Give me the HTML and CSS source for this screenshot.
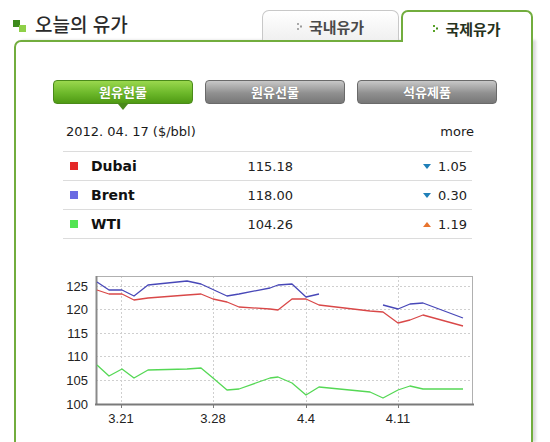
FILE: index.html
```html
<!DOCTYPE html>
<html lang="ko">
<head>
<meta charset="utf-8">
<title>오늘의 유가</title>
<link rel="stylesheet" href="styles.css">
</head>
<body>
<div class="page">
  <div class="head">
    <div class="title">
      <svg class="title-icon" width="13" height="12" viewBox="0 0 13 12">
        <rect x="0" y="0" width="7" height="7" fill="#3d8a1c"/>
        <rect x="6" y="5" width="7" height="7" fill="#8fd048"/>
      </svg>
      <span>오늘의 유가</span>
    </div>
    <div class="tabs">
      <div class="tab">
        <svg class="bullet" width="5" height="7" viewBox="0 0 5 7"><rect x="0" y="0" width="2" height="2" fill="#aaa"/><rect x="3" y="2.5" width="2" height="2" fill="#999"/><rect x="0" y="5" width="2" height="2" fill="#aaa"/></svg>
        <span>국내유가</span>
      </div>
      <div class="tab tab-on">
        <svg class="bullet" width="5" height="7" viewBox="0 0 5 7"><rect x="0" y="0" width="2" height="2" fill="#5aa428"/><rect x="3" y="2.5" width="2" height="2" fill="#3f8a18"/><rect x="0" y="5" width="2" height="2" fill="#5aa428"/></svg>
        <span>국제유가</span>
      </div>
    </div>
  </div>
  <div class="panel">
    <div class="btns">
      <div class="btn btn-on">원유현물</div>
      <div class="btn">원유선물</div>
      <div class="btn">석유제품</div>
    </div>
    <div class="info">
      <div class="date-row">
        <span>2012. 04. 17 ($/bbl)</span>
        <span>more</span>
      </div>
      <div class="rows">
        <div class="row">
          <span class="mark mark-red"></span>
          <span class="name">Dubai</span>
          <span class="val">115.18</span>
          <span class="chg"><span class="tri tri-down"></span>1.05</span>
        </div>
        <div class="row">
          <span class="mark mark-blue"></span>
          <span class="name">Brent</span>
          <span class="val">118.00</span>
          <span class="chg"><span class="tri tri-down"></span>0.30</span>
        </div>
        <div class="row">
          <span class="mark mark-green"></span>
          <span class="name">WTI</span>
          <span class="val">104.26</span>
          <span class="chg"><span class="tri tri-up"></span>1.19</span>
        </div>
      </div>
    </div>
    <svg class="chart" width="515" height="182" viewBox="16 260 515 182">
      <g stroke="#cfcfcf" stroke-width="1" stroke-dasharray="2 2" fill="none">
        <line x1="96" y1="285.5" x2="473" y2="285.5"/>
        <line x1="96" y1="308.5" x2="473" y2="308.5"/>
        <line x1="96" y1="332.5" x2="473" y2="332.5"/>
        <line x1="96" y1="355.5" x2="473" y2="355.5"/>
        <line x1="96" y1="379.5" x2="473" y2="379.5"/>
        <line x1="121.5" y1="275" x2="121.5" y2="403"/>
        <line x1="213.5" y1="275" x2="213.5" y2="403"/>
        <line x1="306.5" y1="275" x2="306.5" y2="403"/>
        <line x1="398.5" y1="275" x2="398.5" y2="403"/>
      </g>
      <line x1="96" y1="275.5" x2="473" y2="275.5" stroke="#b0b0b0" stroke-width="1"/>
      <line x1="472.5" y1="275" x2="472.5" y2="403" stroke="#b0b0b0" stroke-width="1"/>
      <line x1="96.5" y1="275" x2="96.5" y2="404" stroke="#8a8a8a" stroke-width="2"/>
      <line x1="95" y1="403.5" x2="474" y2="403.5" stroke="#7a7a7a" stroke-width="2"/>
      <g stroke="#7a7a7a" stroke-width="1">
        <line x1="121.5" y1="403" x2="121.5" y2="407"/>
        <line x1="213.5" y1="403" x2="213.5" y2="407"/>
        <line x1="306.5" y1="403" x2="306.5" y2="407"/>
        <line x1="398.5" y1="403" x2="398.5" y2="407"/>
      </g>
      <g class="axis" text-anchor="end">
        <text x="88" y="290">125</text>
        <text x="88" y="313">120</text>
        <text x="88" y="337">115</text>
        <text x="88" y="360">110</text>
        <text x="88" y="384">105</text>
        <text x="88" y="408">100</text>
      </g>
      <g class="axis" text-anchor="middle">
        <text x="121" y="422">3.21</text>
        <text x="213" y="422">3.28</text>
        <text x="306" y="422">4.4</text>
        <text x="398" y="422">4.11</text>
      </g>
      <g fill="none" stroke-width="1.3" stroke-linejoin="round">
        <polyline stroke="#55d855" points="97,364 109,375 122,368 134,377 148,369 187,368 201,367 213,377 227,389 239,388 270,377 278,376 292,382 306,394 319,386 370,391 383,397 398,389 410,385 423,388 463,388"/>
        <polyline stroke="#d94848" points="97,289 109,293 122,293 134,299 148,297 187,294 201,293 213,298 227,301 239,306 270,308 278,309 292,298 306,298 319,304 370,310 383,311 398,322 410,319 423,314 463,325"/>
        <polyline stroke="#4848b8" points="97,281 109,289 122,289 134,295 148,284 187,280 201,283 227,295 239,293 270,287 278,284 292,283 306,296 319,293"/>
        <polyline stroke="#4848b8" points="383,304 398,308 410,303 423,302 463,317"/>
      </g>
    </svg>
  </div>
</div>
</body>
</html>
```
FILE: styles.css
```css
body {
  margin: 0;
  background: #fff;
  font-family: "DejaVu Sans", "Noto Sans CJK KR", sans-serif;
  color: #222;
}

.page {
  width: 550px;
  padding-top: 10px;
}

.head {
  display: flex;
  justify-content: space-between;
  align-items: flex-start;
  height: 30px;
  padding: 0 17px 0 13px;
}

.title {
  display: flex;
  align-items: center;
  gap: 9px;
  margin-top: 3px;
  font-family: "Noto Sans CJK KR", sans-serif;
  font-size: 19px;
  font-weight: 500;
  line-height: 22px;
  color: #2a2a2a;
}

.title-icon {
  display: block;
  margin-top: 4px;
}

.tabs {
  display: flex;
  gap: 2px;
}

.tab {
  box-sizing: border-box;
  width: 137px;
  height: 30px;
  border: 1px solid #c8c8c8;
  border-bottom: none;
  border-radius: 7px 7px 0 0;
  background: linear-gradient(#ffffff, #f0f0f0);
  display: flex;
  align-items: center;
  justify-content: center;
  gap: 7px;
  padding-top: 2px;
  font-family: "Noto Sans CJK KR", sans-serif;
  font-size: 15px;
  font-weight: bold;
  color: #4a4a4a;
}

.tab-on {
  width: 132px;
  height: 32px;
  border: 2px solid #72ad3e;
  border-bottom: none;
  background: #fff;
  color: #26321c;
  position: relative;
  z-index: 1;
}

.bullet {
  display: block;
}

.panel {
  box-sizing: border-box;
  margin-left: 14px;
  width: 519px;
  height: 402px;
  border: 2px solid #72ad3e;
  border-bottom: none;
  border-radius: 7px 0 0 0;
  box-shadow: 3px 0 3px rgba(0, 0, 0, 0.15);
  padding-top: 38px;
}

.btns {
  display: flex;
  gap: 12px;
  padding-left: 37px;
}

.btn {
  box-sizing: border-box;
  width: 140px;
  height: 24px;
  border: 1px solid #6a6a6a;
  border-radius: 4px;
  background: linear-gradient(#c8c8c8, #909090 55%, #777);
  color: #fff;
  font-family: "Noto Sans CJK KR", sans-serif;
  font-size: 13px;
  font-weight: bold;
  line-height: 22px;
  text-align: center;
  text-shadow: 0 0 1px rgba(0, 0, 0, 0.3);
}

.btn-on {
  position: relative;
  border-color: #4a8a1a;
  background: linear-gradient(#9ad84e, #6cb82a 55%, #4f9a14);
}

.btn-on::after {
  content: "";
  position: absolute;
  left: 64px;
  top: 23px;
  border-left: 5px solid transparent;
  border-right: 5px solid transparent;
  border-top: 6px solid #4a8a1a;
}

.info {
  width: 409px;
  margin: 16px 0 0 47px;
}

.date-row {
  display: flex;
  justify-content: space-between;
  padding: 0 0 7px 3px;
  margin-right: -2px;
  font-size: 13px;
  line-height: 24px;
  color: #1a1a1a;
}

.rows {
  border-top: 1px solid #dcdcdc;
}

.row {
  display: flex;
  align-items: center;
  height: 28px;
  border-bottom: 1px solid #dcdcdc;
  padding: 0 5px 0 7px;
  font-size: 13px;
}

.mark {
  width: 8px;
  height: 8px;
  margin-right: 13px;
}

.mark-red { background: #e42828; }
.mark-blue { background: #6a6ae2; }
.mark-green { background: #52e452; }

.name {
  width: 100px;
  font-size: 14px;
  font-weight: bold;
  color: #111;
}

.val {
  width: 102px;
  text-align: right;
  color: #222;
}

.chg {
  margin-left: auto;
  display: flex;
  align-items: center;
  gap: 7px;
  color: #222;
}

.tri {
  width: 0;
  height: 0;
  border-left: 4px solid transparent;
  border-right: 4px solid transparent;
}

.tri-down {
  border-top: 5px solid #1f7fb8;
}

.tri-up {
  border-bottom: 5px solid #e8742e;
}

.chart {
  display: block;
  margin-top: 22px;
}

.axis {
  font-family: "Liberation Sans", sans-serif;
  font-size: 13px;
  fill: #222;
}
```
